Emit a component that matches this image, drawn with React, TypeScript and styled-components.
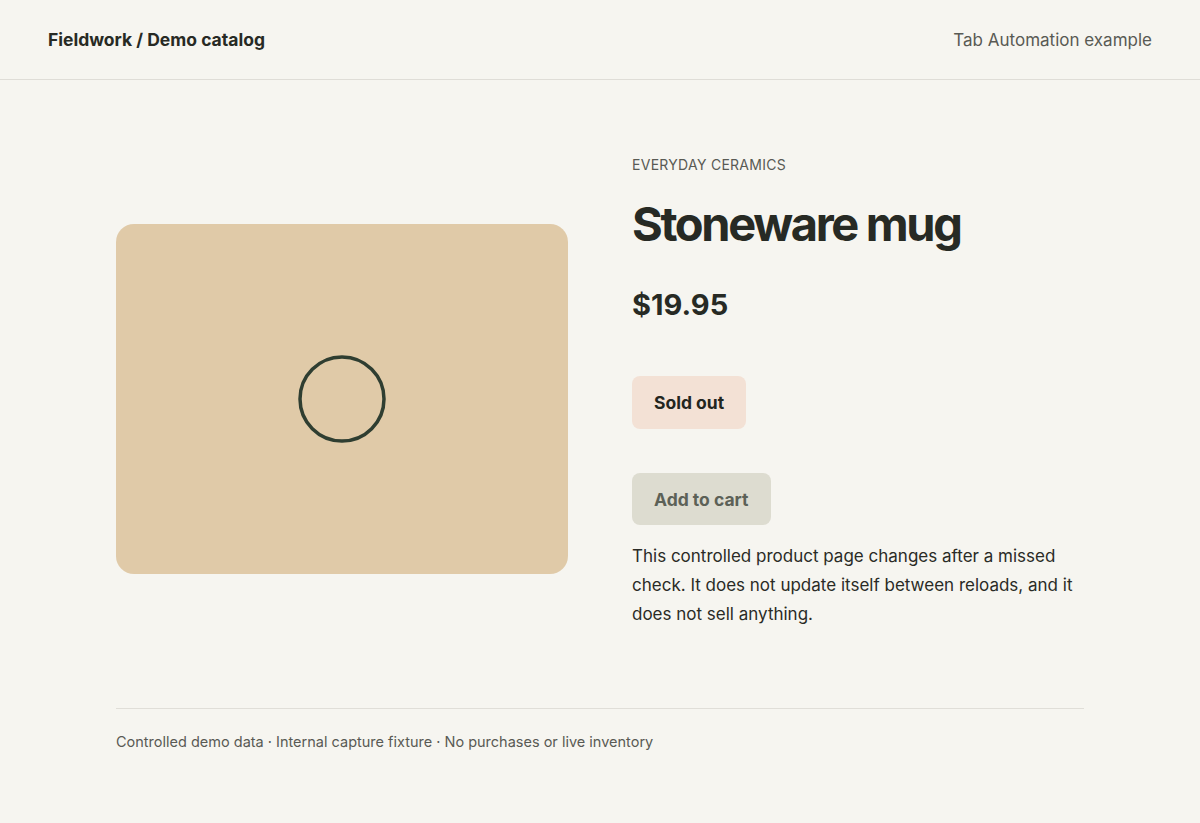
import { createGlobalStyle, styled } from 'styled-components'

const GlobalStyle = createGlobalStyle`
  * {
    box-sizing: border-box;
  }
  html, body {
    margin: 0;
    padding: 0;
    background: #f6f5f0;
    color: #272a24;
    font-family: Inter, 'Noto Sans', 'Liberation Sans', sans-serif;
  }
`

const App = () => {
  return (
    <Page>
      <GlobalStyle />
      <Header>
        <Brand>Fieldwork / Demo catalog</Brand>
        <HeaderNote>Tab Automation example</HeaderNote>
      </Header>

      <Main>
        <Product>
          <Visual>
            <svg width="90" height="90" viewBox="0 0 90 90" aria-hidden="true">
              <circle cx="45" cy="45" r="42" fill="none" stroke="#2f3e31" strokeWidth="3.5" />
            </svg>
          </Visual>

          <Info>
            <Eyebrow>Everyday ceramics</Eyebrow>
            <Title>Stoneware mug</Title>
            <Price>$19.95</Price>
            <Badge>Sold out</Badge>
            <CartButton disabled>Add to cart</CartButton>
            <Description>
              This controlled product page changes after a missed check. It does not update itself
              between reloads, and it does not sell anything.
            </Description>
          </Info>
        </Product>

        <Footer>Controlled demo data · Internal capture fixture · No purchases or live inventory</Footer>
      </Main>
    </Page>
  )
}

const Page = styled.div`
  min-height: 823px;
`

const Header = styled.header`
  height: 80px;
  padding: 0 48px;
  display: flex;
  align-items: center;
  justify-content: space-between;
  border-bottom: 1px solid #dfddd7;
`
const Brand = styled.div`
  font-size: 17.5px;
  font-weight: 700;
  color: #272a24;
`
const HeaderNote = styled.div`
  font-size: 17px;
  color: #595a54;
`

const Main = styled.main`
  max-width: 968px;
  margin: 0 auto;
  padding-top: 75px;
`
const Product = styled.section`
  display: grid;
  grid-template-columns: 1fr 1fr;
  gap: 64px;
  align-items: center;
`
const Visual = styled.div`
  height: 350px;
  border-radius: 18px;
  background: #e0caa8;
  display: flex;
  align-items: center;
  justify-content: center;
`

const Info = styled.div`
  display: flex;
  flex-direction: column;
  align-items: flex-start;
`
const Eyebrow = styled.div`
  font-size: 14px;
  line-height: 20px;
  text-transform: uppercase;
  letter-spacing: 0.02em;
  color: #595a54;
  margin-bottom: 22px;
`
const Title = styled.h1`
  margin: 0 0 38px;
  font-size: 47px;
  line-height: 53px;
  font-weight: 700;
  letter-spacing: -0.05em;
  color: #272a24;
`
const Price = styled.div`
  font-size: 29px;
  line-height: 34px;
  font-weight: 700;
  color: #272a24;
  margin-bottom: 54px;
`
const Badge = styled.div`
  padding: 0 22px;
  height: 53px;
  display: flex;
  align-items: center;
  border-radius: 8px;
  background: #f3e1d5;
  font-size: 17.5px;
  font-weight: 700;
  color: #23261f;
  margin-bottom: 44px;
`
const CartButton = styled.button`
  height: 52px;
  padding: 0 22px;
  border: none;
  border-radius: 8px;
  background: #dddcd0;
  font-family: inherit;
  font-size: 17.5px;
  font-weight: 700;
  color: #5c6157;
  cursor: not-allowed;
`
const Description = styled.p`
  margin: 17px 0 13px;
  font-size: 17px;
  line-height: 29px;
  color: #2a2b26;
`

const Footer = styled.footer`
  margin-top: 66px;
  border-top: 1px solid #e0ded8;
  padding-top: 23px;
  font-size: 14.5px;
  line-height: 20px;
  color: #595a54;
`

export default App
